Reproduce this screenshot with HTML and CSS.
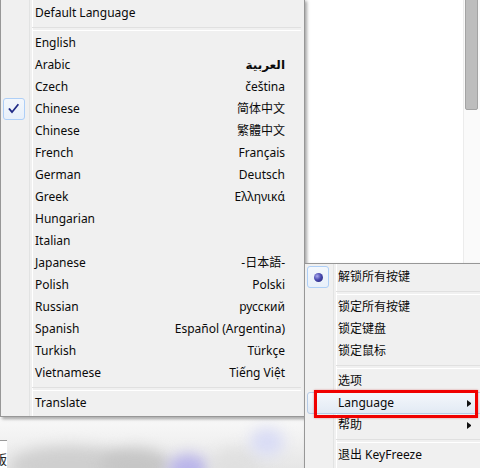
FILE: index.html
```html
<!DOCTYPE html>
<html lang="en">
<head>
<meta charset="utf-8">
<title>KeyFreeze – Language</title>
<link rel="stylesheet" href="styles.css">
</head>
<body>
<div class="desk">
  <!-- window behind the popups -->
  <div class="scrolltrack"><div class="thumb"></div></div>
  <div class="backdrop">
    <div class="edge"><span class="edge-char">版</span></div>
    <div class="blob b1"></div>
    <div class="blob b2"></div>
    <div class="blob b3"></div>
    <div class="blob b4"></div>
    <div class="blob b5"></div>
  </div>

  <!-- language submenu -->
  <div class="menu menu-lang">
    <div class="item"><span class="ico"></span><span class="label">Default Language</span><span class="native"></span></div>
    <div class="sep"></div>
    <div class="item"><span class="ico"></span><span class="label">English</span><span class="native"></span></div>
    <div class="item"><span class="ico"></span><span class="label">Arabic</span><span class="native arabic">العربية</span></div>
    <div class="item"><span class="ico"></span><span class="label">Czech</span><span class="native">čeština</span></div>
    <div class="item checked">
      <span class="ico"><svg width="20" height="20" viewBox="1 1 20 20"><path d="M6.5 11.2 L9 14.2 L14.8 7" fill="none" stroke="#202a86" stroke-width="1.8" stroke-linecap="square"/></svg></span>
      <span class="label">Chinese</span><span class="native">简体中文</span>
    </div>
    <div class="item"><span class="ico"></span><span class="label">Chinese</span><span class="native">繁體中文</span></div>
    <div class="item"><span class="ico"></span><span class="label">French</span><span class="native">Français</span></div>
    <div class="item"><span class="ico"></span><span class="label">German</span><span class="native">Deutsch</span></div>
    <div class="item"><span class="ico"></span><span class="label">Greek</span><span class="native">Ελληνικά</span></div>
    <div class="item"><span class="ico"></span><span class="label">Hungarian</span><span class="native"></span></div>
    <div class="item"><span class="ico"></span><span class="label">Italian</span><span class="native"></span></div>
    <div class="item"><span class="ico"></span><span class="label">Japanese</span><span class="native jp">-日本語-</span></div>
    <div class="item"><span class="ico"></span><span class="label">Polish</span><span class="native">Polski</span></div>
    <div class="item"><span class="ico"></span><span class="label">Russian</span><span class="native">русский</span></div>
    <div class="item"><span class="ico"></span><span class="label">Spanish</span><span class="native">Español (Argentina)</span></div>
    <div class="item"><span class="ico"></span><span class="label">Turkish</span><span class="native">Türkçe</span></div>
    <div class="item"><span class="ico"></span><span class="label">Vietnamese</span><span class="native">Tiếng Việt</span></div>
    <div class="sep"></div>
    <div class="item"><span class="ico"></span><span class="label">Translate</span><span class="native"></span></div>
  </div>

  <!-- tray menu -->
  <div class="menu menu-tray">
    <div class="item checked"><span class="ico"><span class="dot"></span></span><span class="label">解锁所有按键</span><span class="arrow"></span></div>
    <div class="sep"></div>
    <div class="item"><span class="ico"></span><span class="label">锁定所有按键</span><span class="arrow"></span></div>
    <div class="item"><span class="ico"></span><span class="label">锁定键盘</span><span class="arrow"></span></div>
    <div class="item"><span class="ico"></span><span class="label">锁定鼠标</span><span class="arrow"></span></div>
    <div class="sep"></div>
    <div class="item"><span class="ico"></span><span class="label">选项</span><span class="arrow"></span></div>
    <div class="item hot"><span class="ico"></span><span class="label">Language</span><span class="arrow sub"></span></div>
    <div class="item"><span class="ico"></span><span class="label">帮助</span><span class="arrow sub"></span></div>
    <div class="sep"></div>
    <div class="item"><span class="ico"></span><span class="label">退出 KeyFreeze</span><span class="arrow"></span></div>
  </div>

  <div class="callout"></div>
</div>
</body>
</html>
```

FILE: styles.css
```css
* { box-sizing: border-box; }

html, body {
  margin: 0;
  padding: 0;
  background: #fff;
}

.desk {
  position: relative;
  width: 480px;
  height: 468px;
  overflow: hidden;
  background: #fff;
  font-family: "Noto Sans", "Noto Sans CJK SC", "DejaVu Sans", sans-serif;
  font-size: 12px;
  color: #0a0a0a;
}

/* scrollbar of the window behind */
.scrolltrack {
  position: absolute;
  left: 463px;
  top: 0;
  width: 17px;
  height: 263px;
  border-left: 1px solid #ececec;
  background: #fafafa;
}
.thumb {
  position: absolute;
  left: 1px;
  top: -3px;
  width: 13px;
  height: 113px;
  background: #bdbdbd;
  border: 1px solid #a3a3a3;
  border-radius: 2px;
}

/* blurred desktop below the language menu */
.backdrop {
  position: absolute;
  left: 0;
  top: 418px;
  width: 310px;
  height: 50px;
  background: linear-gradient(#f8f8f8, #f2f2f2 40%, #e6e6e6);
  overflow: hidden;
}
.edge {
  position: absolute;
  left: 0;
  top: 22px;
  width: 7px;
  height: 30px;
  border-top: 1px solid #9a9a9a;
  background: #fff;
  overflow: hidden;
  z-index: 1;
}
.edge-char {
  position: absolute;
  left: -6px;
  top: 8px;
  font-size: 13px;
  color: #222;
}
.blob {
  position: absolute;
  border-radius: 50%;
  filter: blur(7px);
}
.b1 { left: 10px; top: 28px; width: 120px; height: 40px; background: #cfcfcf; }
.b2 { left: 100px; top: 30px; width: 70px; height: 36px; background: #c6c6c6; }
.b3 { left: 168px; top: 36px; width: 40px; height: 30px; background: #b9b4ea; }
.b4 { left: 210px; top: 30px; width: 50px; height: 40px; background: #e0e0e0; }
.b5 { left: 250px; top: 10px; width: 34px; height: 28px; background: #d9dcf5; }

/* shared popup menu look */
.menu {
  position: absolute;
  background: #f0f0f0;
  border: 1px solid #979797;
  padding: 2px;
  box-shadow: 2px 2px 3px rgba(0, 0, 0, 0.35);
  display: flex;
  flex-direction: column;
}
.menu::before {
  content: "";
  position: absolute;
  top: 0;
  bottom: 0;
  left: 28px;
  width: 2px;
  border-left: 1px solid #e2e3e3;
  border-right: 1px solid #fff;
}

.item {
  position: relative;
  height: 22px;
  display: flex;
  align-items: center;
  white-space: nowrap;
  border: 1px solid transparent;
  border-radius: 3px;
}
.ico {
  flex: 0 0 22px;
  min-width: 0;
  width: 22px;
  height: 22px;
  margin-left: -1px;
  margin-top: -1px;
  margin-bottom: -1px;
  display: flex;
  align-items: center;
  justify-content: center;
}
.label {
  margin-left: 9px;
  margin-bottom: 2px;
  flex: 1 1 auto;
}
.native {
  margin-right: 16px;
  margin-bottom: 2px;
}
.arabic { font-weight: bold; }

.checked .ico {
  border: 1px solid #aecff7;
  border-radius: 3px;
  background: linear-gradient(#f3f7fc, #e8f0fa);
}

.sep {
  height: 8px;
  position: relative;
}
.sep::after {
  content: "";
  position: absolute;
  left: 29px;
  right: 1px;
  top: 3px;
  height: 2px;
  border-top: 1px solid #e0e0e0;
  border-bottom: 1px solid #fff;
}

/* language list */
.menu-lang {
  left: 0;
  top: -1px;
  width: 305px;
  z-index: 2;
}
.menu-lang .label { margin-left: 10px; }

/* tray menu */
.menu-tray {
  left: 304px;
  top: 263px;
  width: 186px;
  z-index: 3;
}
.menu-tray .label { margin-left: 9px; }
.dot {
  width: 9px;
  height: 9px;
  border-radius: 50%;
  background: radial-gradient(circle at 35% 35%, #a9a9ee 0, #4a4ab0 45%, #1e1e6e 100%);
}
.arrow {
  flex: 0 0 auto;
  width: 4px;
  height: 7px;
  margin-right: 15px;
}
.arrow.sub {
  border-left: 4px solid #111;
  border-top: 3.5px solid transparent;
  border-bottom: 3.5px solid transparent;
}
.hot {
  border-color: #b6cbe6;
  background: linear-gradient(#f4f7fb, #e2eaf4);
}

/* red annotation frame */
.callout {
  position: absolute;
  left: 314px;
  top: 390px;
  width: 164px;
  height: 28px;
  border: 3px solid #f00000;
  box-shadow: 0 0 2px rgba(200, 0, 0, 0.4);
  z-index: 4;
}
```
